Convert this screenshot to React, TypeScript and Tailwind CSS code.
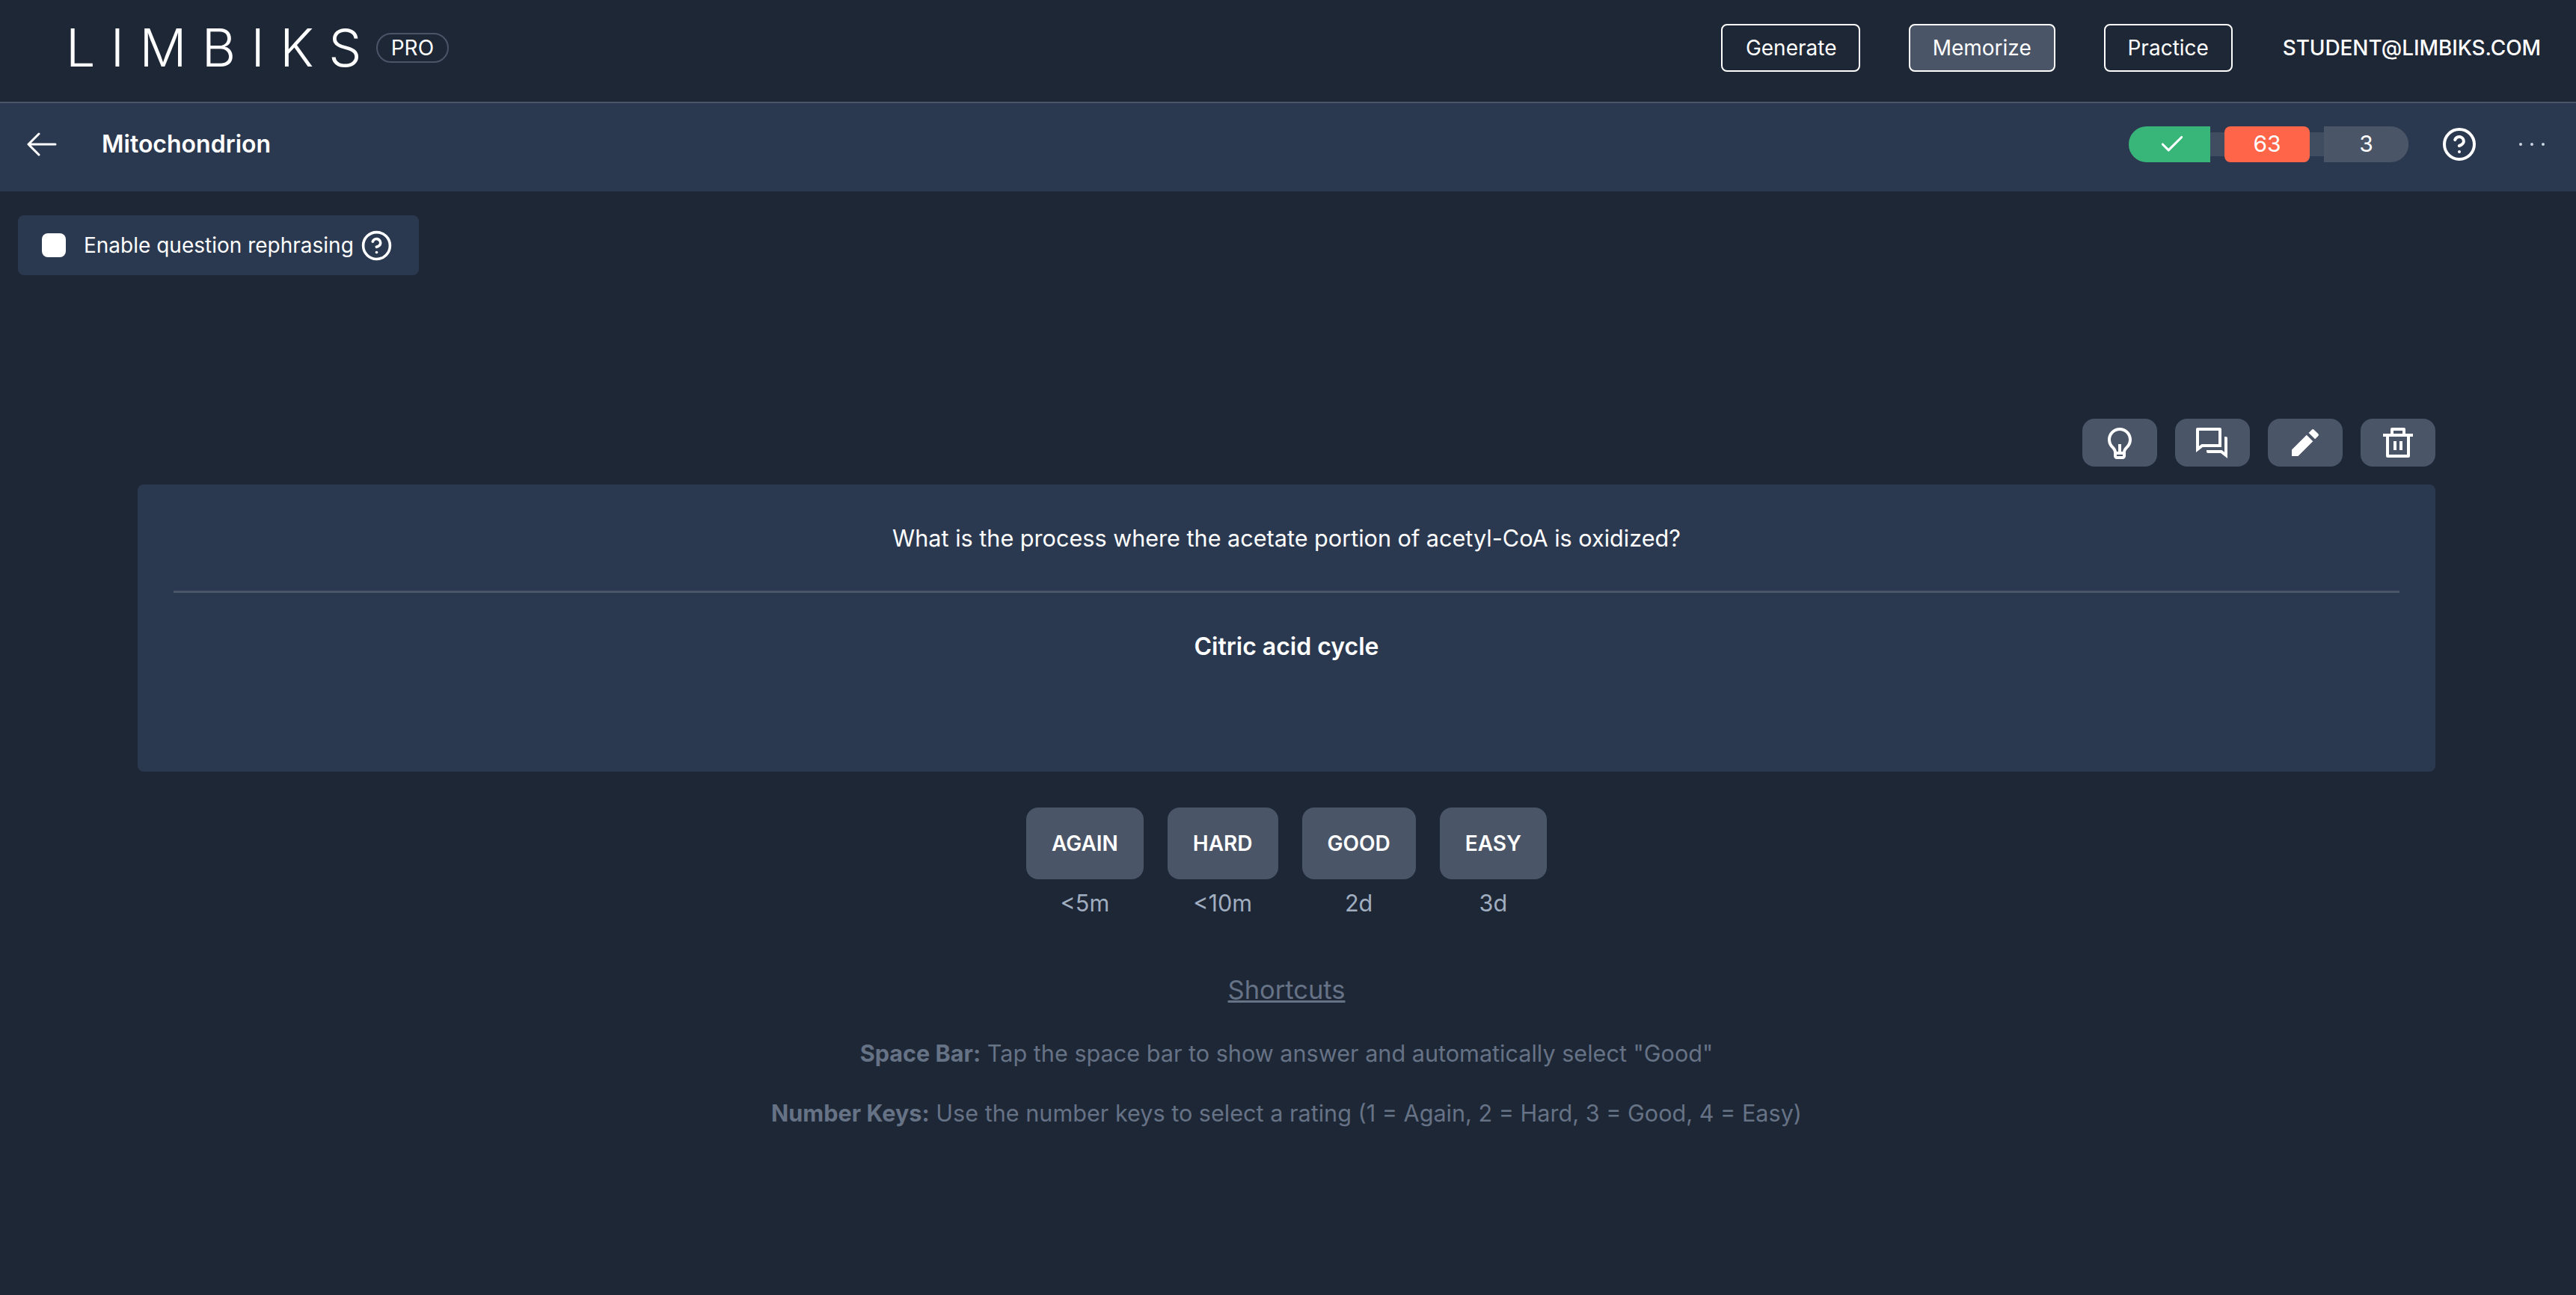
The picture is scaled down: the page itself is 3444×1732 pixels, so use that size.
import { Check, CircleHelp } from "lucide-react";
import { RiDeleteBinLine, RiLightbulbLine, RiPencilFill, RiQuestionAnswerLine } from "react-icons/ri";

const ratings = [
  { label: "AGAIN", time: "<5m" },
  { label: "HARD", time: "<10m" },
  { label: "GOOD", time: "2d" },
  { label: "EASY", time: "3d" },
];

const actions = [RiLightbulbLine, RiQuestionAnswerLine, RiPencilFill, RiDeleteBinLine];

export default function App() {
  return (
    <div className="min-h-screen bg-[#1e2736] text-white font-['Inter',sans-serif]">
      {/* Top nav */}
      <header className="flex h-[138px] items-center justify-between border-b-2 border-[#4a5568] pb-[8px] pl-[88px] pr-[47px]">
        <div className="flex items-center">
          <span className="text-[70px] leading-none font-light tracking-[20.3px]">LIMBIKS</span>
          <span className="ml-[-1px] flex h-[40px] w-[97px] items-center justify-center rounded-full border-2 border-[#4a5568] text-[28px]">
            PRO
          </span>
        </div>
        <nav className="flex items-center text-[28px]">
          <button className="flex h-[64px] w-[186px] items-center justify-center rounded-lg border-2 border-white pl-[2px]">Generate</button>
          <button className="ml-[65px] flex h-[64px] w-[196px] items-center justify-center rounded-lg border-2 border-white bg-[#4a5568]">
            Memorize
          </button>
          <button className="ml-[65px] flex h-[64px] w-[172px] items-center justify-center rounded-lg border-2 border-white">Practice</button>
          <span className="ml-[67px] font-medium tracking-[-0.1px]">STUDENT@LIMBIKS.COM</span>
        </nav>
      </header>

      {/* Deck bar */}
      <div className="flex h-[118px] items-center justify-between bg-[#2b3950] pb-[9px] pl-[36px] pr-[42px]">
        <div className="flex items-center">
          <svg width="40" height="32" viewBox="0 0 40 32" fill="none" stroke="currentColor" strokeWidth="3" strokeLinecap="round" strokeLinejoin="round">
            <path d="M38 16H3M16 2 2 16l14 14" />
          </svg>
          <span className="ml-[60px] text-[32px] font-semibold">Mitochondrion</span>
        </div>
        <div className="flex items-center">
          <div className="flex items-center rounded-full bg-[linear-gradient(#404c60,#404c60)] bg-[length:100%_32px] bg-center bg-no-repeat">
            <div className="flex h-[48px] w-[109px] items-center justify-center rounded-l-full rounded-r-lg bg-[#38b67a] pl-[6px]">
              <Check size={38} strokeWidth={2} />
            </div>
            <div className="ml-[19px] flex h-[48px] w-[114px] items-center justify-center rounded-lg bg-[#ff6549] text-[30px]">63</div>
            <div className="ml-[19px] flex h-[48px] w-[113px] items-center justify-center rounded-l-lg rounded-r-full bg-[#4a5568] text-[30px]">3</div>
          </div>
          <CircleHelp className="ml-[44px]" size={48} strokeWidth={2} />
          <span className="ml-[56px] flex gap-[11px]">
            <span className="size-[4px] rounded-full bg-[#cbd5e0]" />
            <span className="size-[4px] rounded-full bg-[#cbd5e0]" />
            <span className="size-[4px] rounded-full bg-[#cbd5e0]" />
          </span>
        </div>
      </div>

      {/* Rephrasing toggle */}
      <div className="ml-[24px] mt-[32px] flex h-[80px] w-[536px] items-center rounded-lg bg-[#2b3950] pl-[32px]">
        <span className="size-[32px] rounded-lg bg-white" />
        <span className="ml-[24px] text-[28px]">Enable question rephrasing</span>
        <CircleHelp className="ml-[9px]" size={43} strokeWidth={2} />
      </div>

      {/* Card actions */}
      <div className="mt-[192px] flex justify-end gap-[24px] pr-[188px]">
        {actions.map((Icon, i) => (
          <button key={i} className="flex h-[64px] w-[100px] items-center justify-center rounded-2xl bg-[#4a5568]">
            <Icon size={48} />
          </button>
        ))}
      </div>

      {/* Card */}
      <div className="ml-[184px] mr-[188px] mt-[24px] h-[384px] rounded-lg bg-[#2b3950] px-[48px] pt-[48px] text-center text-[30.6px]">
        <p className="leading-[48px]">What is the process where the acetate portion of acetyl-CoA is oxidized?</p>
        <div className="mt-[46px] h-[3px] bg-[#4a5568]" />
        <p className="mt-[48px] text-[32px] font-semibold leading-[48px]">Citric acid cycle</p>
      </div>

      {/* Ratings */}
      <div className="mt-[48px] flex justify-center gap-[32px] pr-[4px]">
        {ratings.map((r) => (
          <div key={r.label} className="flex flex-col items-center">
            <button className="flex h-[96px] items-center rounded-2xl bg-[#4a5568] px-[34px] text-[28px] font-semibold">{r.label}</button>
            <span className="mt-[12px] text-[30.6px] leading-[40px] text-[#a0aec0]">{r.time}</span>
          </div>
        ))}
      </div>

      {/* Shortcuts */}
      <div className="mt-[72px] pr-[4px] text-center text-[30.6px] text-[#667285]">
        <p className="text-[34.5px] leading-[48px] underline">Shortcuts</p>
        <p className="mt-[39px] leading-[44px]">
          <b className="font-bold">Space Bar:</b> Tap the space bar to show answer and automatically select "Good"
        </p>
        <p className="mt-[36px] leading-[44px]">
          <b className="font-bold">Number Keys:</b> Use the number keys to select a rating (1 = Again, 2 = Hard, 3 = Good, 4 = Easy)
        </p>
      </div>
    </div>
  );
}
